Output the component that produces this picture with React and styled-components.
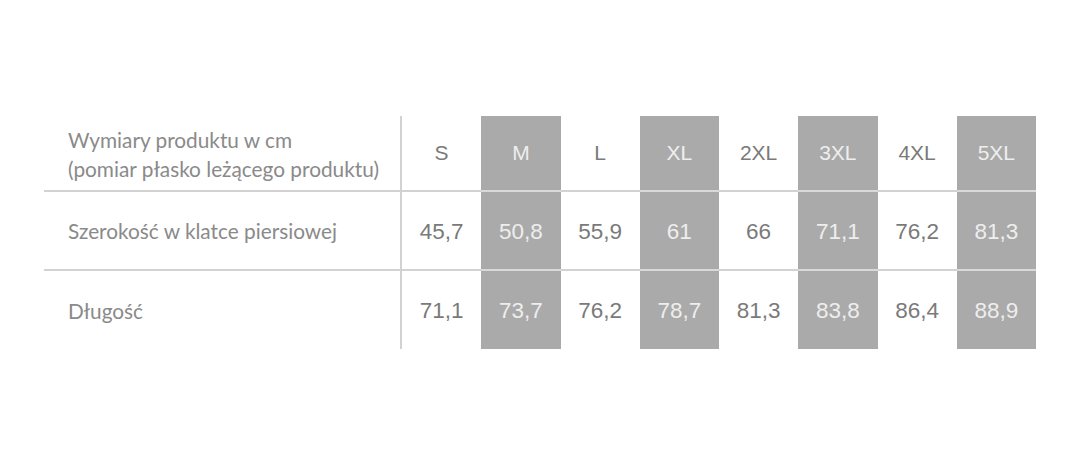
import React from "react";
import styled, { createGlobalStyle } from "styled-components";

const GlobalStyle = createGlobalStyle`
  html, body {
    margin: 0;
    padding: 0;
    background: #ffffff;
  }
`;

const Page = styled.div`
  width: 1080px;
  height: 465px;
  padding: 116px 0 0 44px;
  box-sizing: border-box;
  background: #fff;
`;

const Table = styled.div`
  display: grid;
  grid-template-columns: 358px repeat(8, 79.25px);
  grid-template-rows: 76px 79px 78px;
`;

const LabelCell = styled.div`
  display: flex;
  align-items: center;
  padding-left: 24px;
  font-family: Lato, "Open Sans", sans-serif;
  font-size: 20.8px;
  line-height: 29px;
  color: #8a8a8a;
  border-right: 2px solid #d2d2d2;
  border-bottom: ${(p) => (p.$last ? "none" : "2px solid #d2d2d2")};
  box-sizing: border-box;
  padding-top: ${(p) => (p.$head ? "2px" : "0")};
`;

const ValueCell = styled.div`
  display: flex;
  align-items: center;
  justify-content: center;
  font-family: "Liberation Sans", Arial, sans-serif;
  font-size: ${(p) => (p.$head ? "21px" : "22.5px")};
  color: ${(p) => (p.$shaded ? "#eeeeee" : "#7a7a7a")};
  background: ${(p) => (p.$shaded ? "#aaaaaa" : "transparent")};
  border-bottom: ${(p) =>
    p.$last ? "none" : p.$shaded ? "2px solid #d9d9d9" : "2px solid #d2d2d2"};
  box-sizing: border-box;
  padding-top: ${(p) => (p.$head ? "0" : "2px")};
`;

const sizes = ["S", "M", "L", "XL", "2XL", "3XL", "4XL", "5XL"];

const rows = [
  { label: "Szerokość w klatce piersiowej", values: ["45,7", "50,8", "55,9", "61", "66", "71,1", "76,2", "81,3"] },
  { label: "Długość", values: ["71,1", "73,7", "76,2", "78,7", "81,3", "83,8", "86,4", "88,9"] },
];

export default function App() {
  return (
    <Page>
      <GlobalStyle />
      <Table>
        <LabelCell $head>
          <div>
            Wymiary produktu w cm
            <br />
            (pomiar płasko leżącego produktu)
          </div>
        </LabelCell>
        {sizes.map((s, i) => (
          <ValueCell key={s} $head $shaded={i % 2 === 1}>
            {s}
          </ValueCell>
        ))}
        {rows.map((row, r) => (
          <React.Fragment key={row.label}>
            <LabelCell $last={r === rows.length - 1}>{row.label}</LabelCell>
            {row.values.map((v, i) => (
              <ValueCell key={i} $shaded={i % 2 === 1} $last={r === rows.length - 1}>
                {v}
              </ValueCell>
            ))}
          </React.Fragment>
        ))}
      </Table>
    </Page>
  );
}
